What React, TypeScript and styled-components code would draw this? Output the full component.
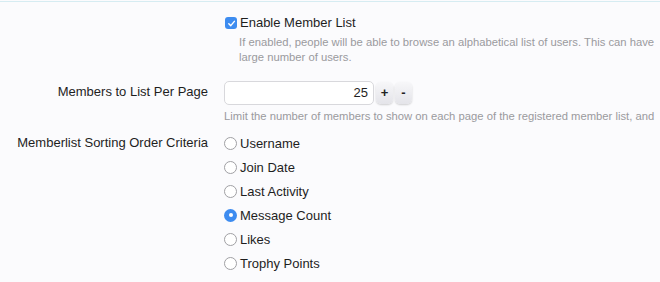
import styled, { createGlobalStyle } from 'styled-components';

const GlobalStyle = createGlobalStyle`
  html, body {
    margin: 0;
    padding: 0;
    background: #fbfbfd;
    overflow: hidden;
  }
  body {
    font-family: 'Liberation Sans', Arial, sans-serif;
    color: #1e1e1e;
  }
`;

const Page = styled.div`
  width: 660px;
  height: 282px;
  border-top: 1px solid #d6ecf2;
  margin-top: 1px;
  box-sizing: border-box;
  overflow: hidden;
`;

const Form = styled.div`
  display: flex;
  flex-direction: column;
  padding-top: 9px;
`;

const Row = styled.div<{ $gap?: number }>`
  display: grid;
  grid-template-columns: 208px 1fr;
  column-gap: 16px;
  margin-bottom: ${(p) => p.$gap ?? 0}px;
`;

const Label = styled.div<{ $top?: number }>`
  text-align: right;
  font-size: 13px;
  line-height: 18px;
  padding-top: ${(p) => p.$top ?? 3}px;
  white-space: nowrap;
`;

const Field = styled.div`
  display: flex;
  flex-direction: column;
  min-width: 0;
`;

const CheckRow = styled.label`
  display: flex;
  align-items: center;
  gap: 3px;
  font-size: 13px;
  line-height: 18px;
  height: 18px;
  padding-top: 3px;
  padding-left: 1px;
`;

const CheckBox = styled.span`
  width: 12px;
  height: 12px;
  border-radius: 3px;
  background: #3d8cf0;
  display: flex;
  align-items: center;
  justify-content: center;
`;

const Hint = styled.div<{ $indent?: number; $top?: number }>`
  font-size: 11.25px;
  line-height: 15px;
  color: #9a9a9e;
  white-space: nowrap;
  padding-left: ${(p) => p.$indent ?? 0}px;
  margin-top: ${(p) => p.$top ?? 3}px;
`;

const SpinRow = styled.div`
  display: flex;
  align-items: center;
  gap: 2px;
`;

const NumberInput = styled.div`
  width: 138px;
  height: 22px;
  border: 1px solid #d8d8dc;
  border-radius: 5px;
  background: #fff;
  font-size: 13px;
  line-height: 22px;
  text-align: right;
  padding: 0 5px;
`;

const SpinButton = styled.div`
  width: 17px;
  height: 22px;
  border-radius: 5px;
  background: linear-gradient(#f7f7f9, #e4e4e9);
  box-shadow: 0 1px 2px rgba(0, 0, 0, 0.18);
  font-size: 13px;
  font-weight: bold;
  line-height: 21px;
  text-align: center;
  color: #222;
`;

const RadioList = styled.div`
  display: flex;
  flex-direction: column;
`;

const RadioItem = styled.label`
  display: flex;
  align-items: center;
  gap: 3px;
  font-size: 13px;
  height: 24px;
`;

const RadioDot = styled.span<{ $on?: boolean }>`
  width: 13px;
  height: 13px;
  border-radius: 50%;
  box-sizing: border-box;
  border: ${(p) => (p.$on ? '0' : '1px solid #a0a0a4')};
  background: ${(p) => (p.$on ? '#3d8cf0' : '#fff')};
  display: flex;
  align-items: center;
  justify-content: center;
  &::after {
    content: '';
    display: ${(p) => (p.$on ? 'block' : 'none')};
    width: 4px;
    height: 4px;
    border-radius: 50%;
    background: #fff;
  }
`;

const sortOptions = [
  'Username',
  'Join Date',
  'Last Activity',
  'Message Count',
  'Likes',
  'Trophy Points',
];

function App() {
  return (
    <Page>
      <GlobalStyle />
      <Form>
        <Row $gap={16}>
          <Label />
          <Field>
            <CheckRow>
              <CheckBox>
                <svg width="9" height="9" viewBox="0 0 10 10">
                  <path
                    d="M2 5.2 L4.2 7.4 L8.2 2.6"
                    fill="none"
                    stroke="#fff"
                    strokeWidth="1.6"
                    strokeLinecap="round"
                    strokeLinejoin="round"
                  />
                </svg>
              </CheckBox>
              Enable Member List
            </CheckRow>
            <Hint $indent={15}>
              If enabled, people will be able to browse an alphabetical list of users. This can have
              <br />
              large number of users.
            </Hint>
          </Field>
        </Row>
        <Row $gap={7}>
          <Label $top={2}>Members to List Per Page</Label>
          <Field>
            <SpinRow>
              <NumberInput>25</NumberInput>
              <SpinButton>+</SpinButton>
              <SpinButton>-</SpinButton>
            </SpinRow>
            <Hint $top={4}>
              Limit the number of members to show on each page of the registered member list, and
            </Hint>
          </Field>
        </Row>
        <Row>
          <Label>Memberlist Sorting Order Criteria</Label>
          <RadioList>
            {sortOptions.map((o) => (
              <RadioItem key={o}>
                <RadioDot $on={o === 'Message Count'} />
                {o}
              </RadioItem>
            ))}
          </RadioList>
        </Row>
      </Form>
    </Page>
  );
}

export default App;
